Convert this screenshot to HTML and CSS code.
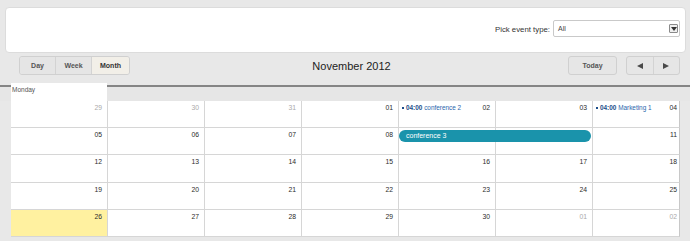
FILE: index.html
```html
<!DOCTYPE html>
<html>
<head>
<meta charset="utf-8">
<link rel="stylesheet" href="styles.css">
</head>
<body>
<div class="panel">
  <span class="pick">Pick event type:</span>
  <div class="select">
    <span class="sel-val">All</span>
    <span class="sel-arrow"><svg width="6" height="4" viewBox="0 0 6 4"><polygon points="0,0 6,0 3,4" fill="#333"/></svg></span>
  </div>
</div>
<div class="toolbar">
  <div class="tabs">
    <span class="tab">Day</span>
    <span class="tab">Week</span>
    <span class="tab active">Month</span>
  </div>
  <div class="title">November 2012</div>
  <div class="right">
    <span class="btn today">Today</span>
    <div class="nav">
      <span class="navbtn"><svg width="6" height="6" viewBox="0 0 6 6"><polygon points="6,0 6,6 0,3" fill="#4a4a4a"/></svg></span>
      <span class="navbtn"><svg width="6" height="6" viewBox="0 0 6 6"><polygon points="0,0 0,6 6,3" fill="#4a4a4a"/></svg></span>
    </div>
  </div>
</div>
<div class="head"><div class="dayname">Monday</div></div>
<div class="month">
  <div class="week">
    <div class="cell other"><span class="num">29</span></div>
    <div class="cell other"><span class="num">30</span></div>
    <div class="cell other"><span class="num">31</span></div>
    <div class="cell"><span class="num">01</span></div>
    <div class="cell"><span class="ev"><i class="dot"></i><b>04:00</b> conference 2</span><span class="num">02</span></div>
    <div class="cell"><span class="num">03</span></div>
    <div class="cell last"><span class="ev"><i class="dot"></i><b>04:00</b> Marketing 1</span><span class="num">04</span></div>
  </div>
  <div class="week">
    <div class="cell"><span class="num">05</span></div>
    <div class="cell"><span class="num">06</span></div>
    <div class="cell"><span class="num">07</span></div>
    <div class="cell"><span class="num">08</span></div>
    <div class="cell"><span class="num">09</span></div>
    <div class="cell"><span class="num">10</span></div>
    <div class="cell last"><span class="num">11</span></div>
    <div class="bar">conference 3</div>
  </div>
  <div class="week tall">
    <div class="cell"><span class="num">12</span></div>
    <div class="cell"><span class="num">13</span></div>
    <div class="cell"><span class="num">14</span></div>
    <div class="cell"><span class="num">15</span></div>
    <div class="cell"><span class="num">16</span></div>
    <div class="cell"><span class="num">17</span></div>
    <div class="cell last"><span class="num">18</span></div>
  </div>
  <div class="week">
    <div class="cell"><span class="num">19</span></div>
    <div class="cell"><span class="num">20</span></div>
    <div class="cell"><span class="num">21</span></div>
    <div class="cell"><span class="num">22</span></div>
    <div class="cell"><span class="num">23</span></div>
    <div class="cell"><span class="num">24</span></div>
    <div class="cell last"><span class="num">25</span></div>
  </div>
  <div class="week">
    <div class="cell today-cell"><span class="num">26</span></div>
    <div class="cell"><span class="num">27</span></div>
    <div class="cell"><span class="num">28</span></div>
    <div class="cell"><span class="num">29</span></div>
    <div class="cell"><span class="num">30</span></div>
    <div class="cell other"><span class="num">01</span></div>
    <div class="cell last other"><span class="num">02</span></div>
  </div>
</div>
</body>
</html>
```
FILE: styles.css
```css
* { box-sizing: border-box; }
body {
  margin: 0;
  background: #e8e8e8;
  font-family: "Liberation Sans", Arial, sans-serif;
  color: #333;
  width: 690px;
  height: 241px;
  overflow: hidden;
}
.panel {
  margin: 7px 4px 0 5px;
  height: 46px;
  background: #fff;
  border: 1px solid #dcdcdc;
  border-radius: 4px;
  display: flex;
  justify-content: flex-end;
  align-items: flex-start;
  padding: 12px 5px 0 0;
}
.pick {
  font-size: 7.8px;
  color: #333;
  margin-top: 5px;
  margin-right: 3px;
}
.select {
  width: 127px;
  height: 17px;
  border: 1px solid #c9c9c9;
  border-radius: 2px;
  display: flex;
  align-items: center;
  justify-content: space-between;
  padding: 0 1px 0 4px;
  background: #fff;
}
.sel-val { font-size: 7px; color: #444; }
.sel-arrow {
  width: 9px;
  height: 9px;
  border: 1px solid #8a8a8a;
  border-radius: 1px;
  background: #efefef;
  display: flex;
  align-items: center;
  justify-content: center;
}
.toolbar {
  margin-top: 3px;
  height: 19px;
  display: grid;
  grid-template-columns: 1fr auto 1fr;
  align-items: center;
  padding: 0 10px 0 19px;
}
.tabs {
  display: flex;
  justify-self: start;
  height: 19px;
  border: 1px solid #d0d0d0;
  border-radius: 3px;
  overflow: hidden;
}
.tab {
  width: 36px;
  display: flex;
  align-items: center;
  justify-content: center;
  font-size: 7px;
  font-weight: bold;
  color: #555;
  background: #e5e5e5;
  border-right: 1px solid #d3d3d3;
}
.tab.active {
  width: 37px;
  border-right: 0;
  background: #f2efe8;
  color: #333;
}
.title {
  font-size: 11px;
  color: #222;
  padding-left: 4px;
}
.right {
  justify-self: end;
  display: flex;
  gap: 9px;
}
.btn, .nav {
  height: 19px;
  border: 1px solid #d0d0d0;
  border-radius: 3px;
  background: #e6e6e6;
}
.today {
  width: 49px;
  display: flex;
  align-items: center;
  justify-content: center;
  font-size: 7px;
  font-weight: bold;
  color: #555;
}
.nav { display: flex; width: 54px; }
.navbtn {
  flex: 1;
  display: flex;
  align-items: center;
  justify-content: center;
}
.navbtn + .navbtn { border-left: 1px solid #d3d3d3; }
.head {
  margin-top: 10px;
  height: 16px;
  border-top: 2px solid #858585;
  background: #e6e6e6;
  display: flex;
  align-items: flex-start;
}
.dayname {
  margin: -4px 0 0 11px;
  width: 96px;
  height: 18px;
  background: #fff;
  font-size: 6.5px;
  color: #555;
  padding: 3px 0 0 1px;
}
.month { margin-left: 11px; width: 669px; }
.week {
  display: grid;
  grid-template-columns: 97px 97px 97px 97px 97px 97px 87px;
  grid-template-rows: 27px;
  height: 27px;
}
.week.tall { height: 28px; grid-template-rows: 28px; }
.cell {
  grid-row: 1;
  background: #fff;
  border-right: 1px solid #d6d6d6;
  border-bottom: 1px solid #d6d6d6;
  display: flex;
  align-items: flex-start;
  padding: 2px 5px 0 3px;
  font-size: 6.8px;
  line-height: 9px;
}
.cell:nth-child(1) { grid-column: 1; }
.cell:nth-child(2) { grid-column: 2; }
.cell:nth-child(3) { grid-column: 3; }
.cell:nth-child(4) { grid-column: 4; }
.cell:nth-child(5) { grid-column: 5; }
.cell:nth-child(6) { grid-column: 6; }
.cell:nth-child(7) { grid-column: 7; }
.cell.last { padding-right: 2px; border-right-color: #c8c8c8; }
.num { margin-left: auto; color: #2b2b2b; }
.other .num { color: #aaa; }
.today-cell { background: #fff1a0; }
.ev {
  font-size: 6.4px;
  color: #2a66ad;
  display: flex;
  align-items: center;
  white-space: pre;
}
.ev b { color: #1c4d8a; margin-left: 2px; }
.dot {
  width: 2px;
  height: 2px;
  background: #1c4d8a;
  display: inline-block;
}
.bar {
  grid-row: 1;
  grid-column: 5 / 7;
  align-self: start;
  margin: 2px 2px 0 0;
  height: 12px;
  border-radius: 6px;
  background: #1a93ab;
  color: #fff;
  font-size: 7px;
  line-height: 12px;
  padding-left: 7px;
  z-index: 1;
}
```
